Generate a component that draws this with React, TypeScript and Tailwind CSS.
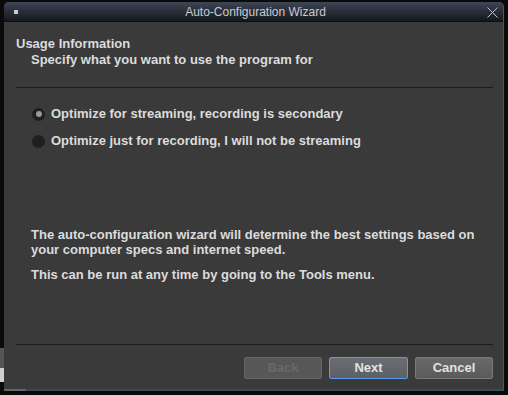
import React from "react";

const font = { fontFamily: '"Liberation Sans", Arial, sans-serif' };

function Radio({ checked }: { checked?: boolean }) {
  return (
    <span className="w-[13px] h-[13px] rounded-full bg-[#1f1f1f] flex items-center justify-center shrink-0">
      {checked && <span className="w-[6px] h-[6px] rounded-full bg-[#9a9a9a]" />}
    </span>
  );
}

export default function App() {
  return (
    <div className="w-[508px] h-[395px] bg-[#0a0a0a] overflow-hidden relative" style={font}>
      <div className="absolute left-0 top-[348px] w-[4px] h-[20px] bg-[#555]" />
      <div className="absolute left-0 top-[368px] w-[4px] h-[14px] bg-[#cfcfcf]" />
      <div className="ml-[4px] mt-[2px] w-[500px] h-[389px] flex flex-col rounded-t-[5px] overflow-hidden bg-[#3a3a3a] border-r border-[#555]">
        <div className="h-[20px] shrink-0 flex items-center relative bg-gradient-to-b from-[#3e4656] to-[#15181d] border-b border-[#0e0e0e]">
          <span className="absolute left-[10px] top-[8px] w-[4px] h-[4px] bg-[#c8ccd4]" />
          <span className="flex-1 text-center text-[12px] text-[#c9cbcf] leading-none pl-[4px]">Auto-Configuration Wizard</span>
          <svg className="absolute right-[5px] top-[5px]" width="11" height="11" viewBox="0 0 11 11">
            <path d="M0.5 0.5 L10.5 10.5 M10.5 0.5 L0.5 10.5" stroke="#c0c4cc" strokeWidth="1" />
          </svg>
        </div>
        <div className="flex-1 flex flex-col pl-[12px] pr-[10px] text-[#dcdcdc] font-bold text-[13px]">
          <div className="mt-[14px] leading-[15px]">Usage Information</div>
          <div className="ml-[15px] mt-[1px] leading-[15px]">Specify what you want to use the program for</div>
          <div className="mt-[20px] h-px bg-[#1c1c1c]" />
          <div className="mt-[18px] ml-[16px] flex flex-col gap-[11px]">
            <div className="flex items-center gap-[6px] leading-[16px]"><Radio checked />Optimize for streaming, recording is secondary</div>
            <div className="flex items-center gap-[6px] leading-[16px]"><Radio />Optimize just for recording, I will not be streaming</div>
          </div>
          <div className="mt-[78px] ml-[15px] leading-[15px]">
            The auto-configuration wizard will determine the best settings based on<br />your computer specs and internet speed.
          </div>
          <div className="mt-[10px] ml-[15px] leading-[15px]">This can be run at any time by going to the Tools menu.</div>
          <div className="mt-[62px] h-px bg-[#1c1c1c]" />
          <div className="mt-[12px] flex justify-end gap-[7px]">
            <button className="w-[78px] h-[22px] rounded-[2px] bg-[#575757] border border-[#666] text-[#686868] font-bold text-[13px]" style={font}>Back</button>
            <button className="w-[79px] h-[22px] rounded-[2px] bg-gradient-to-b from-[#6a6e74] to-[#5c6066] border border-[#5c9ee6] text-[#e2e2e2] font-bold text-[13px]" style={font}>Next</button>
            <button className="w-[78px] h-[22px] rounded-[2px] bg-gradient-to-b from-[#6a6a6a] to-[#5a5a5a] border border-[#7a7a7a] text-[#e2e2e2] font-bold text-[13px]" style={font}>Cancel</button>
          </div>
        </div>
      </div>
      <div className="absolute left-[4px] top-[389px] w-[500px] h-[2px] bg-[#3a4a5c]">
        <div className="w-[22px] h-[2px] bg-[#666]" />
      </div>
    </div>
  );
}
